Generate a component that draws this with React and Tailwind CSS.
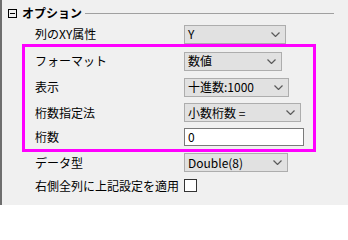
import React from 'react';

const uiFont = { fontFamily: '"Noto Sans CJK JP", "Liberation Sans", sans-serif' };

const Chevron = () => (
    <svg width="9" height="5" viewBox="0 0 9 5" className="shrink-0">
        <path d="M0.5 0.5 L4.5 4.5 L8.5 0.5" fill="none" stroke="#5a5a5a" strokeWidth="1.2" />
    </svg>
);

const Select = ({ value, width }) => (
    <div className={`flex h-[19px] items-center justify-between border border-[#adadad] bg-[#e1e1e1] pl-[3px] pr-[5px] text-[12px] leading-none text-black ${width}`}>
        <span>{value}</span>
        <Chevron />
    </div>
);

// label column starts at x=35, control column at x=184
const Row = ({ label, height, children, indent = 'pl-[33px]' }) => (
    <div className={`flex items-center ${height} ${indent}`}>
        <div className="w-[149px] shrink-0 whitespace-nowrap text-[12px] leading-none text-black">{label}</div>
        {children}
    </div>
);

export default function App() {
    return (
        <div style={uiFont} className="flex h-[205px] w-[348px] flex-col overflow-hidden border-l-2 border-[#6e6e6e] bg-[#f0f0f0]">
            <div className="mt-[4px] flex h-[18px] shrink-0 items-center">
                <div className="ml-[6px] flex h-[9px] w-[9px] items-center justify-center border border-black">
                    <div className="h-px w-[5px] bg-black" />
                </div>
                <span className="ml-[5px] text-[12px] font-bold leading-none text-black">オプション</span>
                <div className="ml-[3px] mr-[14px] h-px flex-1 bg-[#a0a0a0]" />
            </div>

            <Row label="列のXY属性" height="h-[22px] pt-[2px] shrink-0">
                <Select value="Y" width="w-[102px]" />
            </Row>

            <div className="ml-[20px] mr-[32px] flex shrink-0 flex-col border-[3px] border-[#ff00ff] pt-px">
                <Row label="フォーマット" height="h-[26px]" indent="pl-[10px]">
                    <Select value="数値" width="w-[98px]" />
                </Row>
                <Row label="表示" height="h-[26px]" indent="pl-[10px]">
                    <Select value="十進数:1000" width="w-[105px]" />
                </Row>
                <Row label="桁数指定法" height="h-[25px]" indent="pl-[10px]">
                    <Select value="小数桁数 =" width="w-[117px]" />
                </Row>
                <Row label="桁数" height="h-[24px]" indent="pl-[10px]">
                    <div className="flex h-[18px] w-[120px] items-center border border-[#7a7a7a] bg-white pl-[3px] text-[12px] leading-none text-black">0</div>
                </Row>
            </div>

            <Row label="データ型" height="h-[21px] shrink-0">
                <Select value="Double(8)" width="w-[104px]" />
            </Row>
            <Row label="右側全列に上記設定を適用" height="h-[25px] shrink-0">
                <div className="h-[13px] w-[13px] border border-[#333333] bg-white" />
            </Row>
        </div>
    );
}
